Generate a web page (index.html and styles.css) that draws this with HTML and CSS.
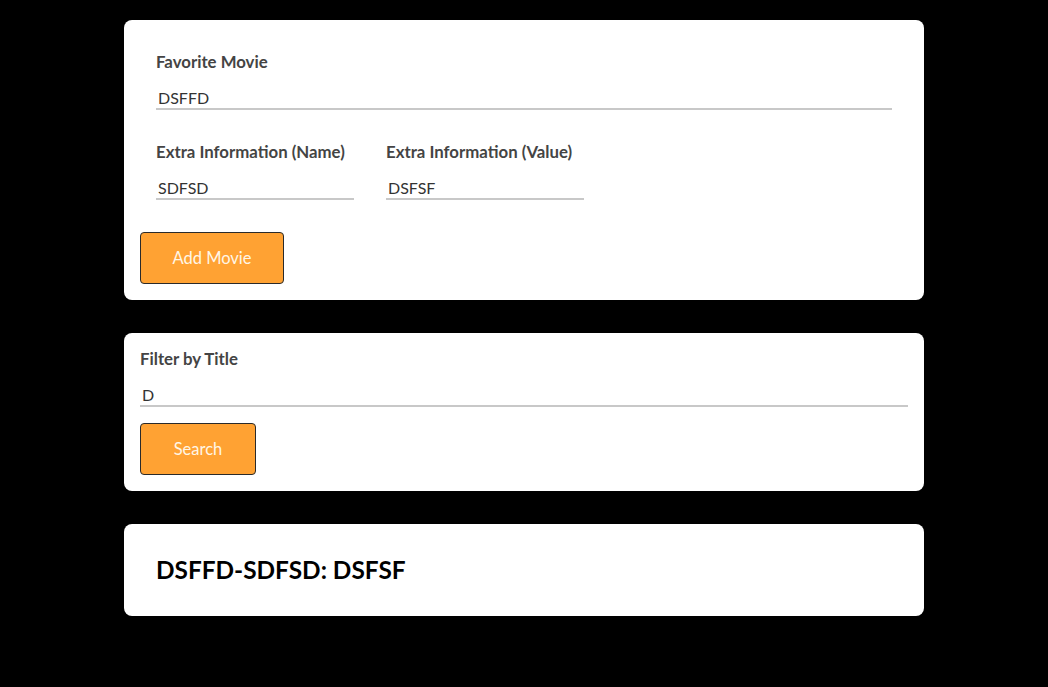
FILE: index.html
```html
<!DOCTYPE html>
<html>
<head>
<meta charset="utf-8">
<link rel="stylesheet" href="styles.css">
</head>
<body>
<div class="page">
  <form class="card">
    <div class="group">
      <label class="label">Favorite Movie</label>
      <input class="input full" value="DSFFD">
    </div>
    <div class="row">
      <div class="group">
        <label class="label">Extra Information (Name)</label>
        <input class="input small" value="SDFSD">
      </div>
      <div class="group">
        <label class="label">Extra Information (Value)</label>
        <input class="input small" value="DSFSF">
      </div>
    </div>
    <button type="button" class="btn btn-add">Add Movie</button>
  </form>
  <form class="card">
    <label class="label">Filter by Title</label>
    <input class="input full" value="D">
    <button type="button" class="btn btn-search">Search</button>
  </form>
  <div class="card">
    <h2 class="movie">DSFFD-SDFSD: DSFSF</h2>
  </div>
</div>
</body>
</html>
```
FILE: styles.css
```css
html, body {
  margin: 0;
  padding: 0;
  background: #000;
}
body {
  font-family: Lato, "Noto Sans", sans-serif;
}
.page {
  width: 800px;
  margin: 0 auto;
  padding-top: 20px;
  display: flex;
  flex-direction: column;
  gap: 33px;
}
.card {
  background: #fff;
  border-radius: 8px;
  padding: 16px;
  display: flex;
  flex-direction: column;
  align-items: flex-start;
  margin: 0;
}
.row {
  display: flex;
}
.group {
  padding: 16px;
  display: flex;
  flex-direction: column;
  align-self: stretch;
}
.row .group {
  align-self: auto;
}
.label {
  font-size: 16.8px;
  font-weight: 700;
  color: #444;
  line-height: 19px;
  display: block;
}
.input {
  font-family: Lato, "Noto Sans", sans-serif;
  font-size: 16px;
  color: #333;
  border: none;
  border-bottom: 2px solid #c8c8c8;
  padding: 4px 2px 0;
  margin-top: 11px;
  height: 28px;
  box-sizing: border-box;
  outline: none;
  background: transparent;
  line-height: 22px;
}
.full {
  width: 100%;
  align-self: stretch;
}
.small {
  width: 198px;
}
.btn {
  font-family: Lato, "Noto Sans", sans-serif;
  font-size: 16.5px;
  color: #fff6e6;
  background: #ffa233;
  border: 1px solid #2a2a2a;
  border-radius: 4px;
  height: 52px;
  cursor: pointer;
  padding: 0;
}
.btn-add {
  width: 144px;
  margin-top: 16px;
}
.btn-search {
  width: 116px;
  margin-top: 16px;
}
.movie {
  font-size: 24.4px;
  line-height: 28px;
  font-weight: 700;
  color: #000;
  margin: 0;
  padding: 16px;
}
```
